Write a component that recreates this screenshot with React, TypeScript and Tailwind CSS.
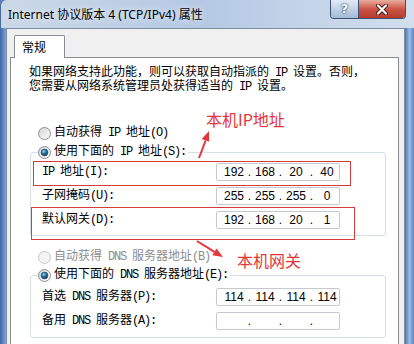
import { Fragment } from 'react';

// SimSun-like: CJK at 12px, half-width Latin squeezed to a 6px advance
const sim = "font-['Liberation_Mono','Noto_Sans_CJK_SC',monospace]";

function SimText({ text }: { text: string }) {
  const parts = text.split(/([\x20-\x7e]+)/);
  return (
    <>
      {parts.map((part, i) =>
        i % 2 === 1 ? (
          <span key={i} className="tracking-[-1.2px]">
            {part}
          </span>
        ) : (
          <Fragment key={i}>{part}</Fragment>
        ),
      )}
    </>
  );
}

function Radio({ checked = false, disabled = false }: { checked?: boolean; disabled?: boolean }) {
  return (
    <svg width="13" height="13" viewBox="0 0 13 13" className="shrink-0">
      <defs>
        <linearGradient id="rb-fill" x1="0" y1="0" x2="1" y2="1">
          <stop offset="0" stopColor="#d4d4d4" />
          <stop offset="1" stopColor="#fdfdfd" />
        </linearGradient>
        <radialGradient id="rb-dot" cx="0.4" cy="0.35" r="0.7">
          <stop offset="0" stopColor="#9ddcf3" />
          <stop offset="0.45" stopColor="#2a6f9e" />
          <stop offset="1" stopColor="#0e3558" />
        </radialGradient>
      </defs>
      <circle
        cx="6.5"
        cy="6.5"
        r="6"
        fill={disabled ? '#f3f3f3' : 'url(#rb-fill)'}
        stroke={disabled ? '#c6c6c6' : '#8e8f8f'}
      />
      {checked && <circle cx="6.5" cy="6.5" r="3.4" fill="url(#rb-dot)" stroke="#1d4d75" strokeWidth="0.6" />}
    </svg>
  );
}

function RadioLabel({ text, checked, disabled }: { text: string; checked?: boolean; disabled?: boolean }) {
  return (
    <span className={`flex h-[14px] items-center gap-[3px] ${disabled ? 'text-[#8d8d8d]' : 'text-black'}`}>
      <Radio checked={checked} disabled={disabled} />
      <span>
        <SimText text={text} />
      </span>
    </span>
  );
}

function IpBox({ parts }: { parts: string[] }) {
  return (
    <div className="flex h-[18px] w-[124px] items-center rounded-[2px] border border-[#c6cad0] bg-white pl-[5px] font-['Liberation_Sans',sans-serif] text-[12px] text-black">
      {parts.map((part, i) => (
        <Fragment key={i}>
          {i > 0 && <span className="w-[7px] text-center">.</span>}
          <span className="w-[24px] text-center">{part}</span>
        </Fragment>
      ))}
    </div>
  );
}

function FieldRow({ label, parts }: { label: string; parts: string[] }) {
  return (
    <div className="flex h-[18px] items-center">
      <span className="w-[174px]">
        <SimText text={label} />
      </span>
      <IpBox parts={parts} />
    </div>
  );
}

export default function App() {
  return (
    <div className="relative flex h-[344px] w-[414px] flex-col overflow-hidden bg-[#5a84c1]">
      {/* title bar */}
      <div className="flex h-[28px] shrink-0 rounded-tl-[6px] border-l border-[#4a6a9a] bg-linear-to-r from-[#cbd8e8] via-[#b5c9e4] to-[#d3dfed]">
        <div className="flex items-center pl-[7px] pt-[2px] font-['Noto_Sans','Noto_Sans_CJK_SC',sans-serif] text-[12px] text-black [text-shadow:0_0_6px_#ffffff]">
          Internet 协议版本 4 (TCP/IPv4) 属性
        </div>
        <div className="ml-auto mr-[8px] flex h-[19px] overflow-hidden rounded-b-[4px] border border-t-0 border-[#3b5275]">
          <div className="flex w-[28px] items-center justify-center border-r border-[#3b5275] bg-linear-to-b from-[#e3ebf5] via-[#c2d2e6] to-[#a3bad6] font-['DejaVu_Sans',sans-serif] text-[13px] font-bold text-white [text-shadow:0_0_2px_#1f3658,0_0_1px_#1f3658]">
            ?
          </div>
          <div className="flex w-[46px] items-center justify-center bg-linear-to-b from-[#e9ab9f] via-[#cb5547] to-[#b63a2d]">
            <svg width="12" height="11" viewBox="0 0 12 11">
              <path d="M2 1.5 L10 9.5 M10 1.5 L2 9.5" stroke="#4a1a16" strokeWidth="4" strokeLinecap="round" />
              <path d="M2 1.5 L10 9.5 M10 1.5 L2 9.5" stroke="#ffffff" strokeWidth="2.2" strokeLinecap="round" />
            </svg>
          </div>
        </div>
      </div>

      {/* body */}
      <div className="flex min-h-0 flex-1">
        <div className="w-[6px] shrink-0 bg-linear-to-r from-[#3c66a6] to-[#7fa5da]" />
        <div className="w-[399px] shrink-0 border border-b-0 border-[#7d8ca3] bg-[#f0f0f0]">
          <div className="flex flex-col pl-[3px] pt-[6px]">
            <div className="relative z-10 -mb-px ml-[4px] flex h-[23px] w-[51px] items-center rounded-t-[2px] border border-b-0 border-[#898c95] bg-white pl-[7px] font-['Noto_Sans_CJK_SC',sans-serif] text-[12px] text-black">
              常规
            </div>
            <div className={`h-[400px] w-[389px] border border-[#898c95] bg-white text-[12px] leading-[14px] text-black ${sim}`}>
              <p className="pl-[18px] pt-[8px]">
                <SimText text="如果网络支持此功能，则可以获取自动指派的 IP 设置。否则，" />
                <br />
                <SimText text="您需要从网络系统管理员处获得适当的 IP 设置。" />
              </p>

              <div className="ml-[27px] mt-[32px]">
                <RadioLabel text="自动获得 IP 地址(O)" />
              </div>

              <fieldset className="ml-[19px] mt-[5px] w-[356px] rounded-[3px] border border-[#d5dfe5]">
                <legend className="ml-[7px] pr-[2px]">
                  <RadioLabel text="使用下面的 IP 地址(S):" checked />
                </legend>
                <div className="flex flex-col gap-[6px] pb-[6px] pl-[11px] pt-[4px]">
                  <FieldRow label="IP 地址(I):" parts={['192', '168', '20', '40']} />
                  <FieldRow label="子网掩码(U):" parts={['255', '255', '255', '0']} />
                  <FieldRow label="默认网关(D):" parts={['192', '168', '20', '1']} />
                </div>
              </fieldset>

              <div className="ml-[27px] mt-[14px]">
                <RadioLabel text="自动获得 DNS 服务器地址(B)" disabled />
              </div>

              <fieldset className="ml-[19px] mt-[4px] w-[356px] rounded-[3px] border border-[#d5dfe5]">
                <legend className="ml-[7px] pr-[2px]">
                  <RadioLabel text="使用下面的 DNS 服务器地址(E):" checked />
                </legend>
                <div className="flex flex-col gap-[6px] pb-[7px] pl-[11px] pt-[6px]">
                  <FieldRow label="首选 DNS 服务器(P):" parts={['114', '114', '114', '114']} />
                  <FieldRow label="备用 DNS 服务器(A):" parts={['', '', '', '']} />
                </div>
              </fieldset>
            </div>
          </div>
        </div>
        <div className="w-[9px] shrink-0 bg-linear-to-r from-[#4b76b6] via-[#9dbbe6] to-[#5a84c1]" />
      </div>

      {/* red annotations drawn over the dialog */}
      <div className="pointer-events-none absolute left-[33px] top-[161px] h-[25px] w-[318px] border border-[#d63c3c]" />
      <div className="pointer-events-none absolute left-[31px] top-[207px] h-[33px] w-[324px] border border-[#d63c3c]" />
      <span className="absolute left-[206px] top-[111px] font-['Noto_Sans_CJK_SC',sans-serif] text-[16px] leading-none text-[#e2363a]">
        本机IP地址
      </span>
      <span className="absolute left-[237px] top-[252px] font-['Noto_Sans_CJK_SC',sans-serif] text-[16px] leading-none text-[#e2363a]">
        本机网关
      </span>
      <svg className="pointer-events-none absolute left-0 top-0" width="414" height="344" viewBox="0 0 414 344">
        <line x1="199" y1="158" x2="205.6" y2="140.5" stroke="#e2363a" strokeWidth="2" />
        <polygon points="209,131 209.1,141.7 201.7,138.9" fill="#e2363a" />
        <line x1="197" y1="241" x2="214.4" y2="251.8" stroke="#e2363a" strokeWidth="2" />
        <polygon points="223,257 212.3,255.3 216.5,248.4" fill="#e2363a" />
      </svg>
    </div>
  );
}
